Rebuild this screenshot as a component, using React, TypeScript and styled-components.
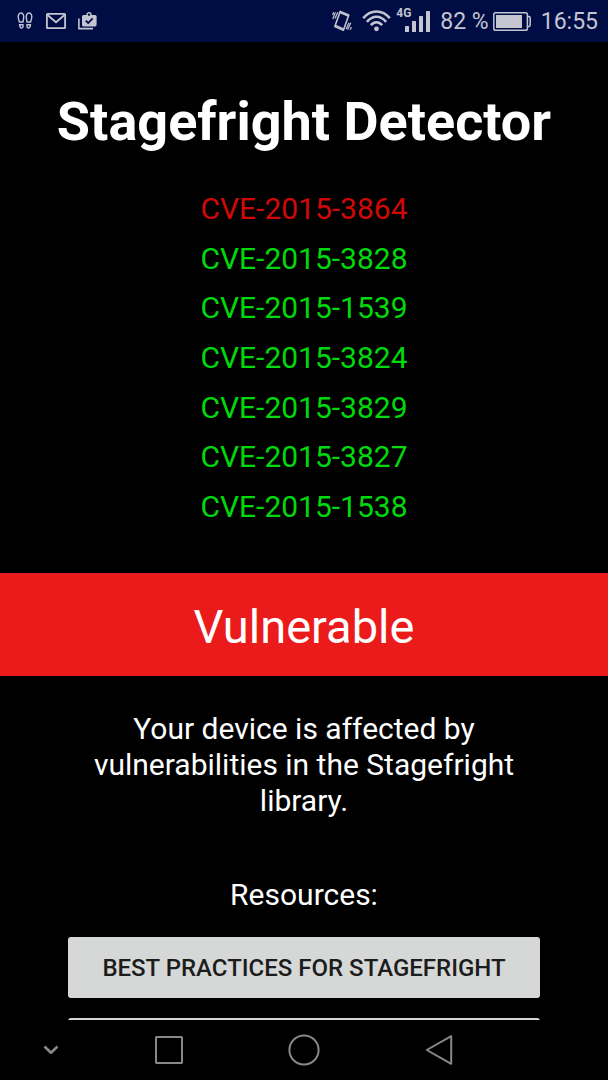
import React from "react";
import styled, { createGlobalStyle } from "styled-components";

const GlobalStyle = createGlobalStyle`
  *, *::before, *::after { box-sizing: border-box; }
  body {
    margin: 0;
    background: #000;
    color: #fff;
    font-family: Roboto, "Liberation Sans", sans-serif;
  }
`;

const Screen = styled.div`
  display: flex;
  flex-direction: column;
  height: 100vh;
  overflow: hidden;
`;

const StatusBar = styled.header`
  flex: none;
  display: flex;
  align-items: center;
  justify-content: space-between;
  height: 42px;
  padding: 0 10px 0 16px;
  background: #000d45;
  color: #c4c5d0;
`;

const StatusGroup = styled.div<{ $gap: number }>`
  display: flex;
  align-items: center;
  gap: ${(p) => p.$gap}px;

  svg { display: block; flex: none; }
`;

const StatusText = styled.span`
  font-size: 23px;
  line-height: 28px;
  padding-top: 2px;
  white-space: nowrap;
`;

const Signal = styled.span`
  position: relative;
  padding-left: 4px;
`;

const NetworkType = styled.span`
  position: absolute;
  top: -4px;
  left: -5px;
  font-size: 12px;
  line-height: 12px;
  font-weight: 700;
`;

const Content = styled.main`
  flex: 1;
  min-height: 0;
  overflow-y: auto;
  scrollbar-width: none;
  text-align: center;
`;

const Title = styled.h1`
  margin: 49px 0 31px;
  font-size: 54px;
  line-height: 62px;
  font-weight: 700;
`;

const CveList = styled.ul`
  display: grid;
  grid-auto-rows: 1fr;
  align-items: center;
  min-height: 348px;
  margin: 0;
  padding: 0;
  list-style: none;
`;

const CveItem = styled.li<{ $affected: boolean }>`
  font-size: 30px;
  line-height: 36px;
  color: ${(p) => (p.$affected ? "#d10808" : "#00d90b")};
`;

const Verdict = styled.h2`
  margin: 41px 0 0;
  padding: 26px 16px 21px;
  background: #eb1b1b;
  font-size: 47px;
  line-height: 56px;
  font-weight: 400;
`;

const Message = styled.p`
  max-width: 440px;
  margin: 35px auto 0;
  font-size: 30px;
  line-height: 36px;
`;

const Resources = styled.section`
  margin-top: 58px;
  padding: 0 68px 24px;
`;

const ResourcesHeading = styled.h3`
  margin: 0 0 24px;
  font-size: 30px;
  line-height: 36px;
  font-weight: 400;
`;

const ResourceButton = styled.button`
  display: block;
  width: 100%;
  min-height: 61px;
  margin-bottom: 20px;
  padding: 0 16px;
  border: 0;
  border-radius: 3px;
  background: #d6d8d7;
  color: #1c1c1c;
  font: 500 24px/28px Roboto, "Liberation Sans", sans-serif;
  text-transform: uppercase;
`;

const NavBar = styled.nav`
  flex: none;
  display: grid;
  grid-template-columns: 3fr 4fr 4fr 4fr 3fr;
  height: 60px;
  background: #000;
`;

const NavButton = styled.button`
  display: flex;
  align-items: center;
  justify-content: center;
  padding: 0;
  border: 0;
  background: none;
  color: #888;
`;

const cves = [
  { id: "CVE-2015-3864", affected: true },
  { id: "CVE-2015-3828", affected: false },
  { id: "CVE-2015-1539", affected: false },
  { id: "CVE-2015-3824", affected: false },
  { id: "CVE-2015-3829", affected: false },
  { id: "CVE-2015-3827", affected: false },
  { id: "CVE-2015-1538", affected: false },
];

const StepsIcon = () => (
  <svg width="18" height="18" viewBox="0 0 18 18" fill="none" stroke="currentColor" strokeWidth="1.4">
    <path d="M5 1 C7.4 1 8 4 7.6 6.4 L7 10 H3.4 L2.4 6.4 C1.8 4 2.6 1 5 1Z" />
    <path d="M13 1 C10.6 1 10 4 10.4 6.4 L11 10 H14.6 L15.6 6.4 C16.2 4 15.4 1 13 1Z" />
    <path d="M3.6 12.8 H7 C7.4 14.5 6.8 16 5.6 16 C4.4 16 3.8 14.6 3.6 12.8Z" />
    <path d="M14.4 12.8 H11 C10.6 14.5 11.2 16 12.4 16 C13.6 16 14.2 14.6 14.4 12.8Z" />
  </svg>
);

const MailIcon = () => (
  <svg width="20" height="16" viewBox="0 0 20 16" fill="none" stroke="currentColor" strokeWidth="1.8">
    <rect x="0.9" y="0.9" width="18.2" height="14.2" rx="0.6" />
    <path d="M1.5 2 L10 9.2 L18.5 2" />
  </svg>
);

const WorkIcon = () => (
  <svg width="19" height="18" viewBox="0 0 19 18">
    <path d="M0.9 6.5 V16.6 H15" fill="none" stroke="currentColor" strokeWidth="1.6" />
    <circle cx="11" cy="2.8" r="2" fill="none" stroke="currentColor" strokeWidth="1.4" />
    <rect x="4" y="3" width="14.6" height="11.4" rx="1.6" fill="currentColor" />
    <circle cx="11" cy="3" r="0.9" fill="#000d45" />
    <path d="M7.8 8.6 L10.2 11 L14.6 6.4" fill="none" stroke="#000d45" strokeWidth="1.8" />
  </svg>
);

const VibrateIcon = () => (
  <svg width="20" height="22" viewBox="0 0 20 22" fill="none" stroke="currentColor">
    <path d="M8.2 1.4 L16.8 5 L11.4 20.2 L2.8 16.4 Z" strokeWidth="1.6" strokeLinejoin="round" />
    <path d="M8 2.6 L16.2 6 M3.6 15.4 L11.4 18.8" strokeWidth="1.4" />
    <path d="M3.4 2.2 L0.8 9 M1.6 2.2 L0.6 5 M5.8 2.2 L3 8.6 M18.8 12.8 L15.6 19.8 M19.4 17 L18.2 19.8 M17 12.8 L14.2 19" strokeWidth="1.2" />
  </svg>
);

const WifiIcon = () => (
  <svg width="29" height="22" viewBox="0 0 29 22" fill="none" stroke="currentColor" strokeWidth="2.6">
    <path d="M1.2 8.2 C8.6 -0.8 20.4 -0.8 27.8 8.2" />
    <path d="M4.9 11.8 C10.6 5 18.4 5 24.1 11.8" />
    <path d="M8.8 15.2 C12.2 11.2 16.8 11.2 20.2 15.2" />
    <circle cx="14.5" cy="18.8" r="2.4" fill="currentColor" stroke="none" />
  </svg>
);

const SignalIcon = () => (
  <svg width="25" height="21" viewBox="0 0 25 21" fill="currentColor">
    <rect x="0" y="15" width="4" height="6" rx="0.6" />
    <rect x="7" y="10" width="4" height="11" rx="0.6" />
    <rect x="14" y="5" width="4" height="16" rx="0.6" />
    <rect x="21" y="0" width="4" height="21" rx="0.6" />
  </svg>
);

const BatteryIcon = () => (
  <svg width="38" height="19" viewBox="0 0 38 19">
    <rect x="0.8" y="0.8" width="33.6" height="17.4" rx="1.8" fill="none" stroke="currentColor" strokeWidth="1.5" />
    <rect x="3" y="3" width="26" height="13" fill="currentColor" />
    <path d="M35 4.6 H36 Q37.2 4.6 37.2 6 V13 Q37.2 14.4 36 14.4 H35" fill="none" stroke="currentColor" strokeWidth="1.5" />
  </svg>
);

const NavIcon = ({ children }: { children: React.ReactNode }) => (
  <svg width="32" height="32" viewBox="0 0 32 32" fill="none" stroke="currentColor" strokeWidth="2" strokeLinejoin="round">
    {children}
  </svg>
);

export default function App() {
  return (
    <Screen>
      <GlobalStyle />
      <StatusBar>
        <StatusGroup $gap={12}>
          <StepsIcon />
          <MailIcon />
          <WorkIcon />
        </StatusGroup>
        <StatusGroup $gap={10}>
          <VibrateIcon />
          <WifiIcon />
          <Signal>
            <NetworkType>4G</NetworkType>
            <SignalIcon />
          </Signal>
          <StatusGroup $gap={4}>
            <StatusText>82 %</StatusText>
            <BatteryIcon />
          </StatusGroup>
          <StatusText>16:55</StatusText>
        </StatusGroup>
      </StatusBar>

      <Content>
        <Title>Stagefright Detector</Title>
        <CveList>
          {cves.map((cve) => (
            <CveItem key={cve.id} $affected={cve.affected}>
              {cve.id}
            </CveItem>
          ))}
        </CveList>
        <Verdict>Vulnerable</Verdict>
        <Message>Your device is affected by vulnerabilities in the Stagefright library.</Message>
        <Resources>
          <ResourcesHeading>Resources:</ResourcesHeading>
          <ResourceButton type="button">Best practices for Stagefright</ResourceButton>
          <ResourceButton type="button" aria-label="More resources" />
        </Resources>
      </Content>

      <NavBar>
        <NavButton type="button" aria-label="Hide navigation bar">
          <NavIcon><path d="M9.5 12.5 L16 18.8 L22.5 12.5" strokeWidth="2.6" /></NavIcon>
        </NavButton>
        <NavButton type="button" aria-label="Recent apps">
          <NavIcon><rect x="3" y="3" width="26" height="26" rx="0.6" /></NavIcon>
        </NavButton>
        <NavButton type="button" aria-label="Home">
          <NavIcon><circle cx="16" cy="16" r="14.6" /></NavIcon>
        </NavButton>
        <NavButton type="button" aria-label="Back">
          <NavIcon><path d="M3.8 16 L28.2 2.2 V29.8 Z" /></NavIcon>
        </NavButton>
      </NavBar>
    </Screen>
  );
}
